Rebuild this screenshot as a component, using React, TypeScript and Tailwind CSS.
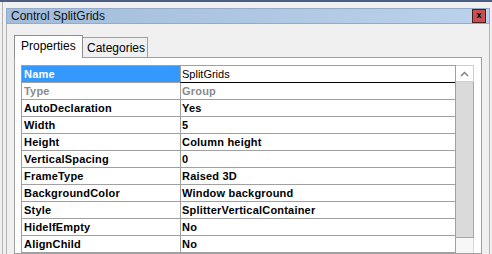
const rows = [
  { name: 'Type', value: 'Group', disabled: true },
  { name: 'AutoDeclaration', value: 'Yes' },
  { name: 'Width', value: '5' },
  { name: 'Height', value: 'Column height' },
  { name: 'VerticalSpacing', value: '0' },
  { name: 'FrameType', value: 'Raised 3D' },
  { name: 'BackgroundColor', value: 'Window background' },
  { name: 'Style', value: 'SplitterVerticalContainer' },
  { name: 'HideIfEmpty', value: 'No' },
  { name: 'AlignChild', value: 'No' },
];

export default function App() {
  return (
    <div className="w-[492px] h-[254px] overflow-hidden bg-[#f0f0f0] border-t-2 border-[#4b5d84] font-['Liberation_Sans',Arial,sans-serif] text-black">
      <div className="flex h-full">
        <div className="w-[2px] shrink-0" />
        <div className="w-px shrink-0 bg-[#b4b4b4]" />
        <div className="w-[3px] shrink-0" />
        <div className="w-[484px] shrink-0 flex flex-col">
          <div className="h-[6px] shrink-0" />
          {/* Title bar */}
          <div className="h-[16px] shrink-0 flex items-center justify-between border border-[#93abc9] bg-gradient-to-r from-[#a3bcd9] to-[#bad2eb]">
            <span className="pl-[4px] text-[12px] leading-none text-[#111]">Control SplitGrids</span>
            <div className="mr-[3px] w-[14px] h-[14px] border border-[#4a1e1e] bg-[#c75050] flex items-center justify-center">
              <span className="text-[9px] font-bold leading-none -mt-px">x</span>
            </div>
          </div>

          {/* Client area */}
          <div className="flex-1 shrink-0 border-l border-r border-[#b4b4b4] pl-[7px] pt-[11px]">
            <div className="flex items-end">
              <div className="relative z-10 w-[69px] h-[23px] -mb-px border-l border-t border-r border-[#8d8d8d] bg-white flex items-start pl-[6px] pt-[3px]">
                <span className="text-[12px] leading-[15px]">Properties</span>
              </div>
              <div className="w-[65px] h-[20px] border-t border-r border-[#a0a0a0] bg-[#f0f0f0] flex items-start pl-[4px] pt-[3px]">
                <span className="text-[12px] leading-[15px]">Categories</span>
              </div>
            </div>

            {/* Tab panel */}
            <div className="w-[468px] border border-[#a0a0a0] bg-white pl-[6px] pt-[7px]">
              <div className="flex">
                {/* Grid */}
                <div className="w-[434px] border-l border-t border-[#a0a0a0] text-[11px] font-bold leading-none tracking-[0.2px]">
                  <div className="flex h-[17px] border-b border-[#a0a0a0]">
                    <div className="w-[158px] bg-[#3399ff] text-white flex items-center pl-[2px]">Name</div>
                    <div className="w-[275px] border-l border-[#a0a0a0] border-b border-b-black -mb-px flex items-center pl-[1px] font-normal tracking-normal text-[11px]">
                      SplitGrids
                    </div>
                  </div>
                  {rows.map((r) => (
                    <div key={r.name} className={`flex h-[17px] border-b border-[#a0a0a0] ${r.disabled ? 'text-[#8a8a8a]' : ''}`}>
                      <div className="w-[158px] flex items-center pl-[2px]">{r.name}</div>
                      <div className="w-[275px] border-l border-[#a0a0a0] flex items-center pl-[1px]">{r.value}</div>
                    </div>
                  ))}
                </div>
                {/* Scrollbar */}
                <div className="w-[19px] border-l border-[#a0a0a0] flex flex-col">
                  <div className="h-[17px] border-t border-r border-b border-[#cfcfcf] bg-white flex items-center justify-center">
                    <svg width="9" height="6" viewBox="0 0 9 6">
                      <path d="M1 5 L4.5 1.5 L8 5" fill="none" stroke="#7a7a7a" strokeWidth="1.4" />
                    </svg>
                  </div>
                  <div className="h-[156px] bg-[#dadada] border-r border-b border-[#a8a8a8]" />
                  <div className="flex-1 bg-[#f7f7f7] border-r border-[#d6d6d6]" />
                </div>
              </div>
            </div>
          </div>
        </div>
      </div>
    </div>
  );
}
